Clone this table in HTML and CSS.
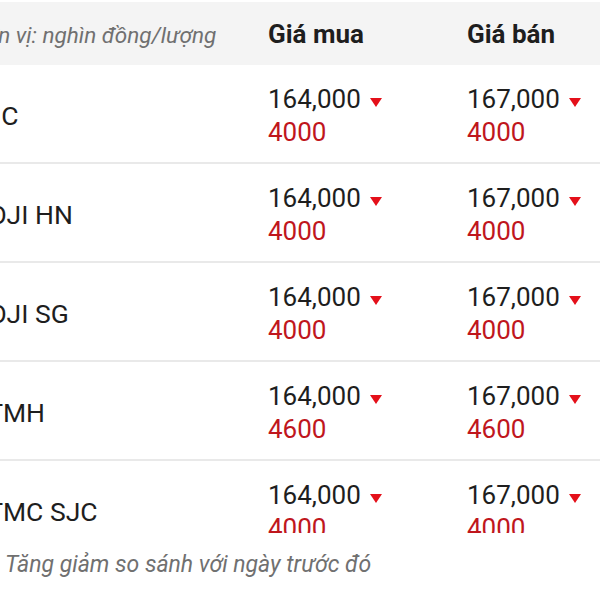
FILE: index.html
```html
<!DOCTYPE html>
<html lang="vi">
<head>
<meta charset="utf-8">
<title>Giá vàng</title>
<link rel="stylesheet" href="styles.css">
</head>
<body>
<div class="table">
  <div class="row head">
    <div class="cell unit">Đơn vị: nghìn đồng/lượng</div>
    <div class="cell th">Giá mua</div>
    <div class="cell th">Giá bán</div>
  </div>
  <div class="row">
    <div class="cell name">SJC</div>
    <div class="cell price"><div class="val">164,000<span class="down"></span></div><div class="delta">4000</div></div>
    <div class="cell price"><div class="val">167,000<span class="down"></span></div><div class="delta">4000</div></div>
  </div>
  <div class="row">
    <div class="cell name">DOJI HN</div>
    <div class="cell price"><div class="val">164,000<span class="down"></span></div><div class="delta">4000</div></div>
    <div class="cell price"><div class="val">167,000<span class="down"></span></div><div class="delta">4000</div></div>
  </div>
  <div class="row">
    <div class="cell name">DOJI SG</div>
    <div class="cell price"><div class="val">164,000<span class="down"></span></div><div class="delta">4000</div></div>
    <div class="cell price"><div class="val">167,000<span class="down"></span></div><div class="delta">4000</div></div>
  </div>
  <div class="row">
    <div class="cell name">BTMH</div>
    <div class="cell price"><div class="val">164,000<span class="down"></span></div><div class="delta">4600</div></div>
    <div class="cell price"><div class="val">167,000<span class="down"></span></div><div class="delta">4600</div></div>
  </div>
  <div class="row">
    <div class="cell name">BTMC SJC</div>
    <div class="cell price"><div class="val">164,000<span class="down"></span></div><div class="delta">4000</div></div>
    <div class="cell price"><div class="val">167,000<span class="down"></span></div><div class="delta">4000</div></div>
  </div>
</div>
<p class="note">Tăng giảm so sánh với ngày trước đó</p>
</body>
</html>
```
FILE: styles.css
```css
html, body {
  margin: 0;
  padding: 0;
  background: #ffffff;
  overflow: hidden;
}
body {
  font-family: Roboto, "Noto Sans", sans-serif;
  color: #202020;
}
.table {
  margin-top: 2px;
  margin-left: -43px;
  width: calc(100% + 43px);
  height: 531px;
  overflow: hidden;
}
.row {
  display: grid;
  grid-template-columns: 295px 199px 1fr;
  align-items: center;
  height: 97px;
  border-bottom: 2px solid #e9e9e9;
}
.row.head {
  height: 63px;
  background: #f4f4f4;
  border-bottom: none;
}
.cell {
  padding-left: 16px;
}
.unit {
  font-size: 22.5px;
  font-style: italic;
  color: #707070;
  white-space: nowrap;
  padding-top: 3px;
  padding-left: 14px;
}
.th {
  font-size: 26px;
  font-weight: 700;
  color: #1e1e1e;
  padding-top: 1px;
}
.name {
  font-size: 26.5px;
  color: #1e1e1e;
  white-space: nowrap;
  padding-top: 4px;
  padding-left: 14px;
}
.price {
  font-size: 26px;
  line-height: 33px;
  padding-top: 4px;
}
.val {
  color: #1e1e1e;
  display: flex;
  align-items: baseline;
}
.down {
  display: inline-block;
  width: 0;
  height: 0;
  margin-left: 9px;
  border-left: 6px solid transparent;
  border-right: 6px solid transparent;
  border-top: 9px solid #e4101a;
  position: relative;
  top: -1px;
}
.delta {
  color: #c0161d;
}
.note {
  margin: 17px 0 0 5px;
  font-size: 23px;
  line-height: 30px;
  font-style: italic;
  color: #707070;
}
```
